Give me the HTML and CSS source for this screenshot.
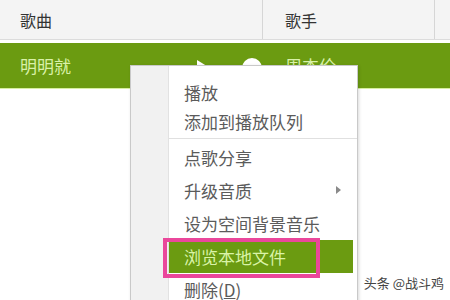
FILE: index.html
```html
<!DOCTYPE html>
<html lang="zh-CN">
<head>
    <meta charset="UTF-8">
    <title>播放列表</title>
    <link rel="stylesheet" href="styles.css">
</head>
<body>
    <div class="list">
        <div class="list-head">
            <div class="col col-song">歌曲</div>
            <div class="col col-singer">歌手</div>
            <div class="col col-rest"></div>
        </div>
        <div class="list-row selected">
            <div class="col col-song">
                <span>明明就</span>
                <span class="row-icons">
                    <svg class="icon-play" width="13" height="16" viewBox="0 0 13 16">
                        <path d="M0 0 L13 8 L0 16 Z" fill="#fff"/>
                    </svg>
                    <svg class="icon-dot" width="20" height="20" viewBox="0 0 20 20">
                        <circle cx="10" cy="10" r="10" fill="#fff"/>
                    </svg>
                </span>
            </div>
            <div class="col col-singer">周杰伦</div>
            <div class="col col-rest"></div>
        </div>
    </div>

    <!-- 右键菜单 -->
    <div class="menu">
        <div class="menu-gutter"></div>
        <div class="menu-list">
            <div class="menu-group small">
                <div class="menu-item">播放</div>
                <div class="menu-item">添加到播放队列</div>
            </div>
            <div class="menu-sep"></div>
            <div class="menu-group">
                <div class="menu-item">点歌分享</div>
                <div class="menu-item has-sub">升级音质<span class="sub-arrow"></span></div>
                <div class="menu-item">设为空间背景音乐</div>
                <div class="menu-item active">浏览本地文件</div>
                <div class="menu-item">删除(<u>D</u>)</div>
            </div>
        </div>
    </div>

    <div class="mark"></div>
    <div class="watermark">头条 @战斗鸡</div>
</body>
</html>
```

FILE: styles.css
```css
body {
    margin: 0;
    width: 450px;
    height: 300px;
    overflow: hidden;
    position: relative;
    background-color: #fff;
    font-family: "Noto Sans CJK SC", "Noto Sans", sans-serif;
}

.list-head {
    display: flex;
    height: 39px;
    background-color: #f4f4f4;
    border-bottom: 1px solid #dcdcdc;
    margin-bottom: 3px;
    color: #333;
    font-size: 16px;
}

.col {
    display: flex;
    align-items: center;
    box-sizing: border-box;
}

.col-song {
    width: 263px;
    padding-left: 20px;
}

.col-singer {
    width: 172px;
    padding-left: 22px;
}

.col-rest {
    flex: 1;
}

.list-head .col-song,
.list-head .col-singer {
    border-right: 1px solid #d6d6d6;
}

.list-row {
    display: flex;
    height: 45px;
    font-size: 17px;
}

.list-row.selected {
    background-color: #6b9b11;
    color: #d9f1a8;
    border-bottom: 1px solid #d6efa0;
}

.row-icons {
    margin-left: auto;
    display: flex;
    align-items: center;
    gap: 32px;
    padding-right: 1px;
}

.icon-play {
    margin-top: 5px;
}

.icon-dot {
    margin-top: 4px;
}

.menu {
    position: absolute;
    left: 130px;
    top: 65px;
    width: 228px;
    height: 250px;
    display: flex;
    background-color: #fff;
    border: 1px solid #c9c9c9;
    box-sizing: border-box;
    box-shadow: 1px 1px 3px rgba(0, 0, 0, 0.15);
    color: #5b5b5b;
    font-size: 17px;
}

.menu-gutter {
    width: 37px;
    background-color: #f1f1f1;
    border-right: 1px solid #e2e2e2;
}

.menu-list {
    flex: 1;
    padding: 12px 4px 0 0;
}

.menu-item {
    height: 33px;
    display: flex;
    align-items: center;
    padding-left: 15px;
    position: relative;
}

.menu-group.small .menu-item {
    height: 29px;
}

.menu-sep {
    height: 1px;
    margin: 2px -4px 2px 0;
    background-color: #e0e0e0;
}

.menu-item.active {
    background-color: #6b9b11;
    color: #daf3a7;
}

.sub-arrow {
    position: absolute;
    right: 12px;
    top: 12px;
    border-left: 5px solid #8a8a8a;
    border-top: 4px solid transparent;
    border-bottom: 4px solid transparent;
}

/* 截图上的粉色标注框 */
.mark {
    position: absolute;
    left: 163px;
    top: 238px;
    width: 157px;
    height: 40px;
    border: 4px solid #ea479b;
    box-sizing: border-box;
}

.watermark {
    position: absolute;
    right: 6px;
    bottom: 8px;
    font-size: 13px;
    color: #444;
    text-shadow: 0 0 2px #fff;
}
```
